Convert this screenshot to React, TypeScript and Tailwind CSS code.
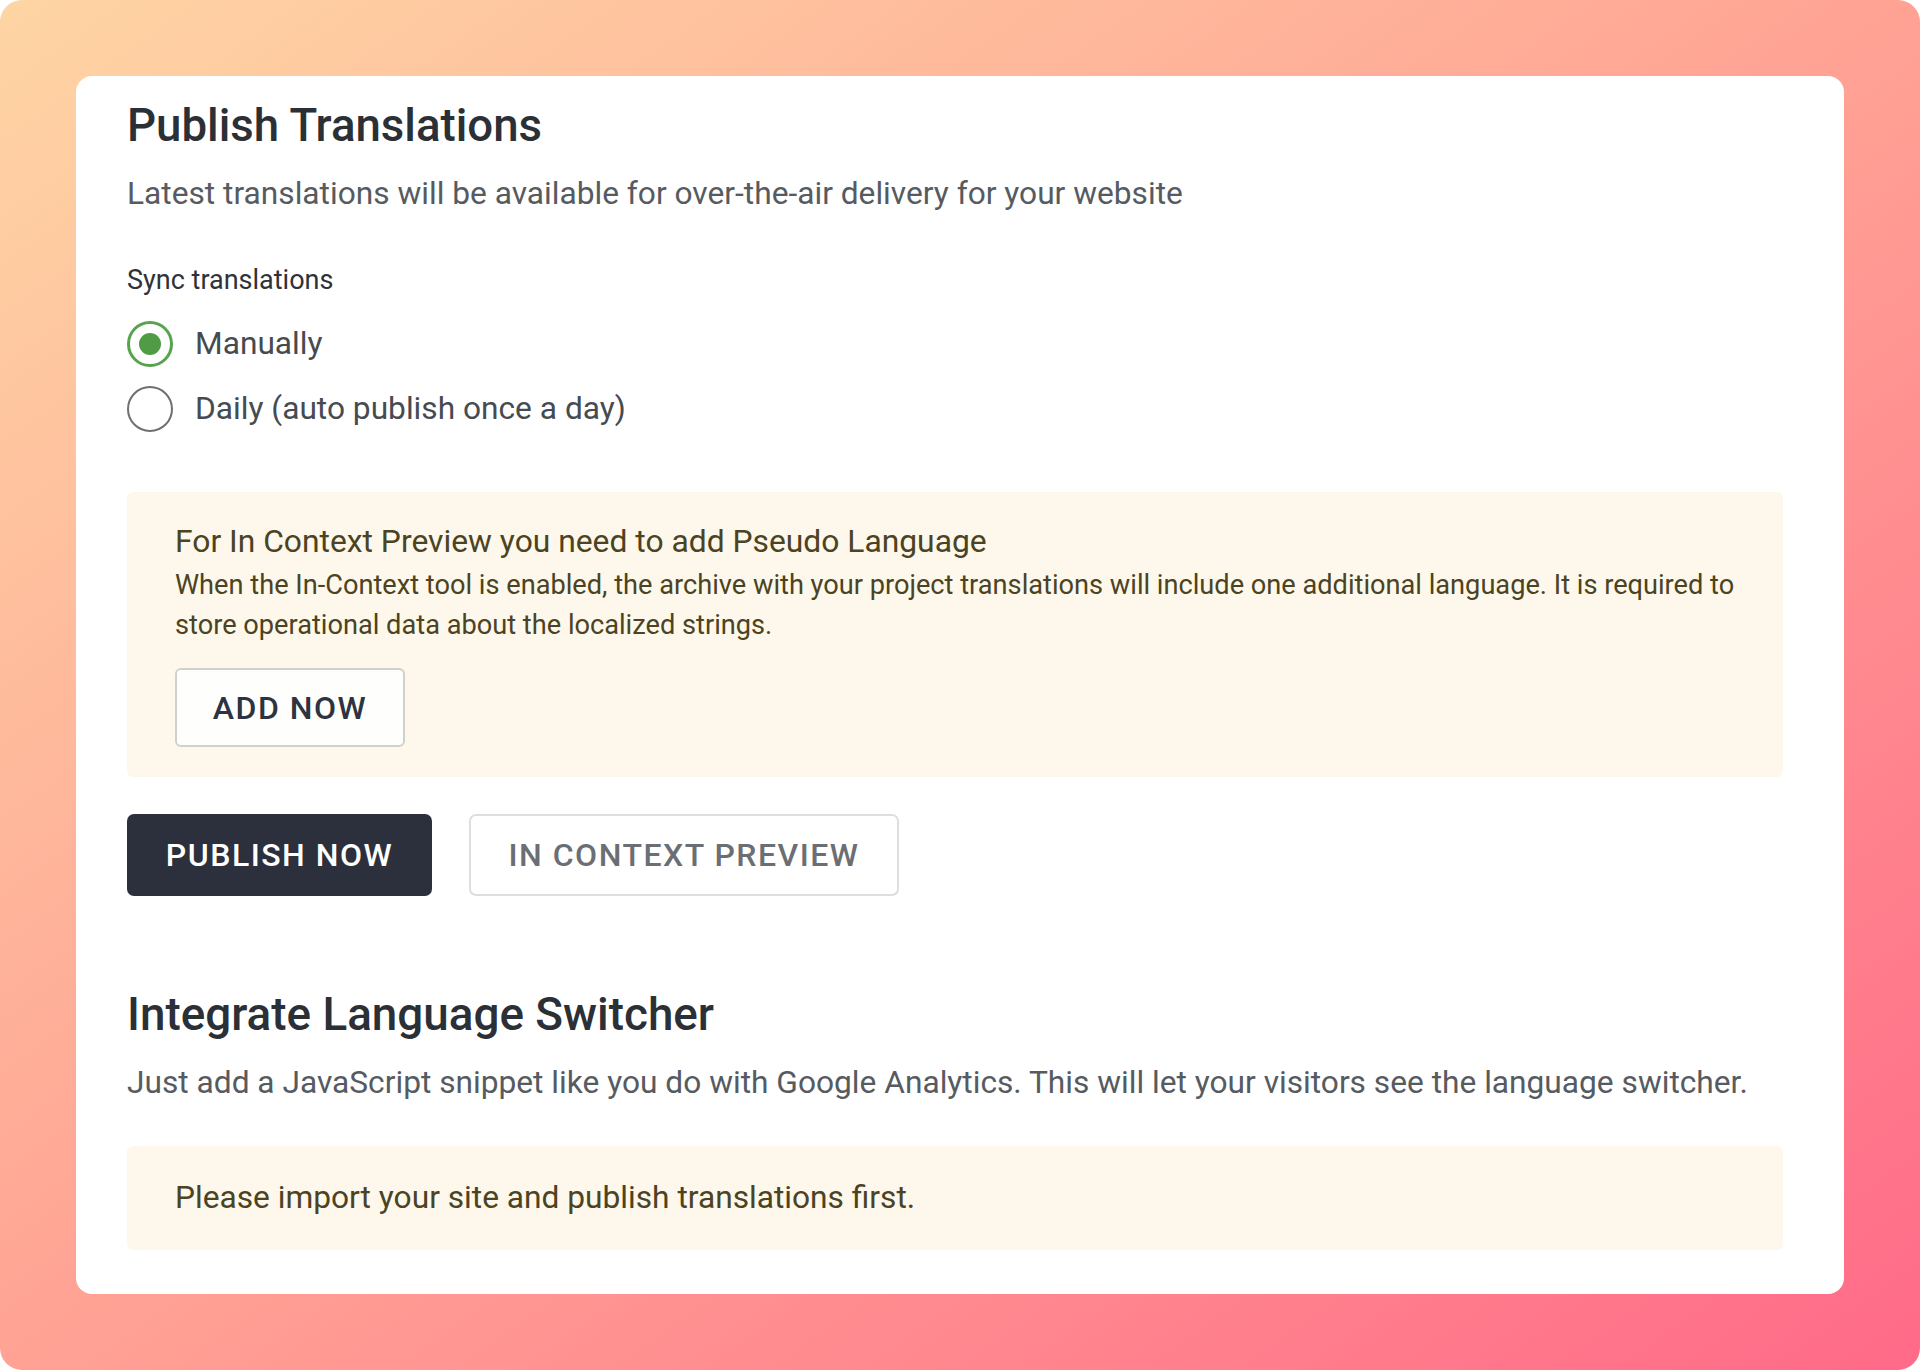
import React from "react";

function Radio({ checked, label }: { checked?: boolean; label: string }) {
  return (
    <div className="flex items-center gap-[22px] h-[46px]">
      {checked ? (
        <div className="w-[46px] h-[46px] rounded-full border-[3px] border-[#58a34e] flex items-center justify-center">
          <div className="w-[22px] h-[22px] rounded-full bg-[#519b47]" />
        </div>
      ) : (
        <div className="w-[46px] h-[46px] rounded-full border-[2px] border-[#6f6f6f]" />
      )}
      <span className="text-[31.7px] leading-[44px] text-[#464b52]">{label}</span>
    </div>
  );
}

export default function App() {
  return (
    <div className="w-[1920px] h-[1370px] bg-white font-['Roboto',sans-serif]">
      <div className="w-full h-full rounded-[22px] p-[76px] bg-[linear-gradient(to_bottom_right,#fed5a4_0%,#ffa896_45%,#ff6a88_100%)]">
        <div className="w-full h-full bg-white rounded-[16px] pl-[51px] pr-[61px] pt-[23px]">
          <h1 className="text-[45.6px] leading-[54px] font-medium text-[#2b3037]">Publish Translations</h1>
          <p className="mt-[19px] text-[31.7px] leading-[44px] text-[#565b61]">
            Latest translations will be available for over-the-air delivery for your website
          </p>
          <div className="mt-[46px] text-[27px] leading-[36px] text-[#2f3338]">Sync translations</div>
          <div className="mt-[23px] flex flex-col gap-[19px]">
            <Radio checked label="Manually" />
            <Radio label="Daily (auto publish once a day)" />
          </div>
          <div className="mt-[60px] bg-[#fdf8eb] rounded-[6px] pl-[48px] pr-[20px] pt-[27px] pb-[30px]">
            <div className="text-[31.8px] leading-[44px] text-[#4b4322]">For In Context Preview you need to add Pseudo Language</div>
            <p className="mt-[2px] text-[27.2px] leading-[40px] text-[#4b4322] whitespace-nowrap">
              When the In-Context tool is enabled, the archive with your project translations will include one additional language. It is required to
              <br />
              store operational data about the localized strings.
            </p>
            <button className="mt-[23px] w-[230px] h-[79px] rounded-[6px] border-[2px] border-[#d2d0ca] bg-[#fefefc] text-[32px] font-medium tracking-[1.5px] text-[#2d3340]">
              ADD NOW
            </button>
          </div>
          <div className="mt-[37px] flex gap-[37px]">
            <button className="w-[305px] h-[82px] rounded-[7px] bg-[#2c303d] text-white text-[32px] font-medium tracking-[1.5px]">
              PUBLISH NOW
            </button>
            <button className="w-[430px] h-[82px] rounded-[7px] border-[2px] border-[#dedede] bg-white text-[#6b6f74] text-[32px] font-medium tracking-[1.5px]">
              IN CONTEXT PREVIEW
            </button>
          </div>
          <h2 className="mt-[92px] text-[45.8px] leading-[54px] font-medium text-[#2b3037]">Integrate Language Switcher</h2>
          <p className="mt-[19px] text-[31.7px] leading-[44px] text-[#565b61]">
            Just add a JavaScript snippet like you do with Google Analytics. This will let your visitors see the language switcher.
          </p>
          <div className="mt-[41px] bg-[#fdf8eb] rounded-[6px] pl-[48px] py-[30px] text-[31.7px] leading-[44px] text-[#4b4322]">
            Please import your site and publish translations first.
          </div>
        </div>
      </div>
    </div>
  );
}
